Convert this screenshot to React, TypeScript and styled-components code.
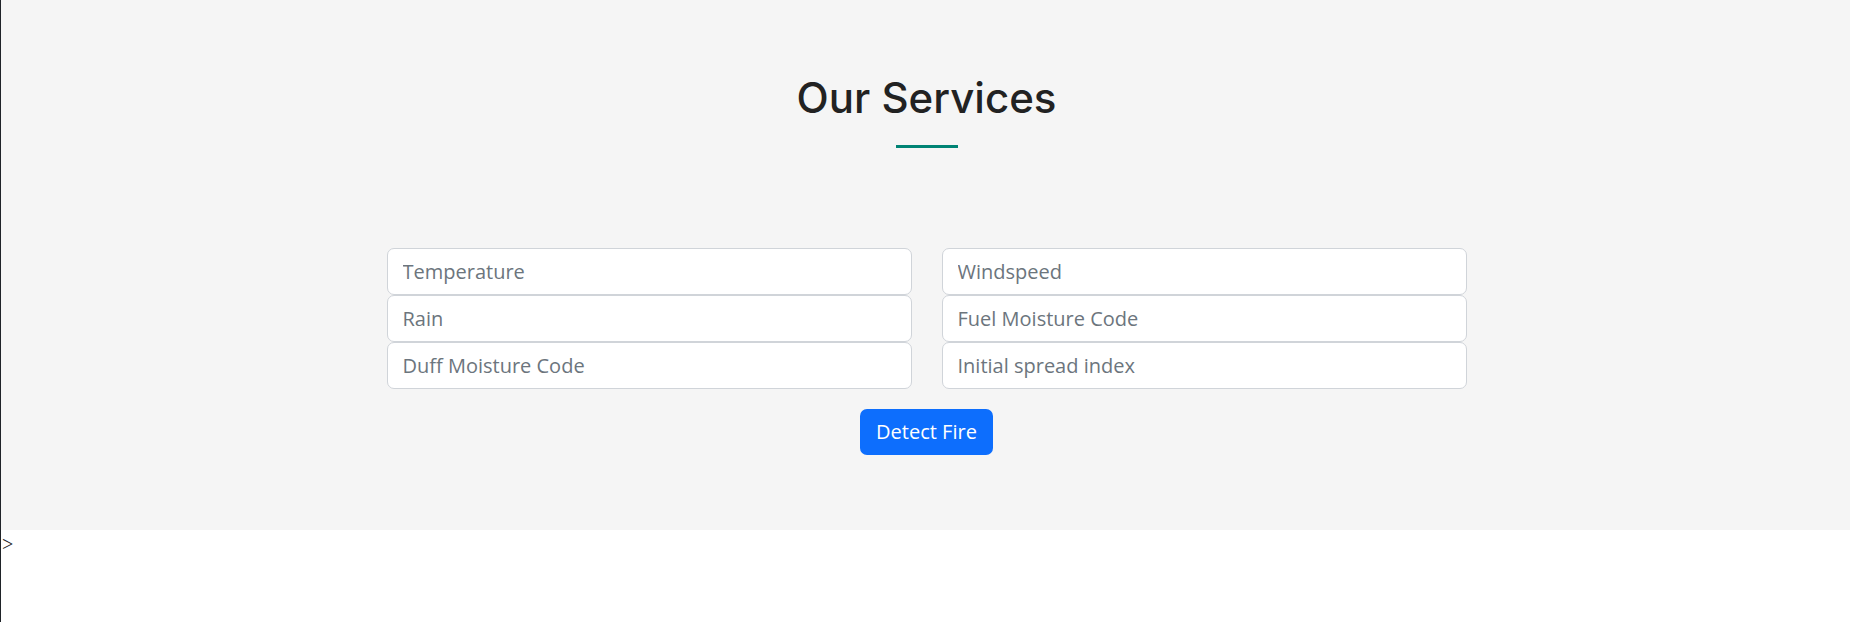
import React, { useState } from "react";
import styled, { createGlobalStyle } from "styled-components";

const GlobalStyle = createGlobalStyle`
  body {
    margin: 0;
    background: #ffffff;
  }
`

const Page = styled.div`
  min-height: 100vh;
  border-left: 1px solid #1f2328;
`

const Section = styled.section`
  background: #f5f5f5;
  padding: 72px 0 75px 2px;
  display: flex;
  flex-direction: column;
  align-items: center;
`

const Title = styled.h2`
  margin: 0;
  color: #222222;
  font-family: Inter, "Open Sans", sans-serif;
  font-size: 42px;
  font-weight: 500;
  line-height: 1.23;
  text-align: center;
`

const Bar = styled.span`
  display: block;
  width: 62px;
  height: 3px;
  margin-top: 21px;
  background: #008374;
`

const Form = styled.form`
  margin-top: 100px;
  width: 1080px;
  display: flex;
  flex-direction: column;
  align-items: center;
`

const Columns = styled.div`
  width: 100%;
  display: grid;
  grid-template-columns: 1fr 1fr;
  column-gap: 30px;
`

const Stack = styled.div`
  display: flex;
  flex-direction: column;
`

const Field = styled.input`
  box-sizing: border-box;
  height: 47px;
  width: 100%;
  padding: 0 15px;
  border: 1px solid #d0d4d9;
  border-radius: 7px;
  background: #ffffff;
  font-family: "Open Sans", "Noto Sans", sans-serif;
  font-size: 20px;
  color: #212529;
  outline: none;

  &::placeholder {
    color: #6c757d;
  }
`

const Button = styled.button`
  margin-top: 20px;
  height: 46px;
  padding: 0 16px;
  border: none;
  border-radius: 7px;
  background: #0d6efd;
  color: #ffffff;
  font-family: "Open Sans", "Noto Sans", sans-serif;
  font-size: 20px;
  cursor: pointer;
`

const Stray = styled.div`
  margin-top: 3px;
  padding-left: 1px;
  font-family: "Liberation Serif", serif;
  font-size: 20px;
  color: #1f2328;
`

const columns: string[][] = [
  ["Temperature", "Rain", "Duff Moisture Code"],
  ["Windspeed", "Fuel Moisture Code", "Initial spread index"],
];

export default function App() {
  const [values, setValues] = useState<Record<string, string>>({});

  const handleChange = (name: string, value: string) => {
    setValues({ ...values, [name]: value });
  };

  return (
    <Page>
      <GlobalStyle />
      <Section>
        <Title>Our Services</Title>
        <Bar />
        <Form onSubmit={(e) => e.preventDefault()}>
          <Columns>
            {columns.map((col, i) => (
              <Stack key={i}>
                {col.map((name) => (
                  <Field
                    key={name}
                    placeholder={name}
                    value={values[name] || ""}
                    onChange={(e) => handleChange(name, e.target.value)}
                  />
                ))}
              </Stack>
            ))}
          </Columns>
          <Button type="submit">Detect Fire</Button>
        </Form>
      </Section>
      <Stray>&gt;</Stray>
    </Page>
  );
}
